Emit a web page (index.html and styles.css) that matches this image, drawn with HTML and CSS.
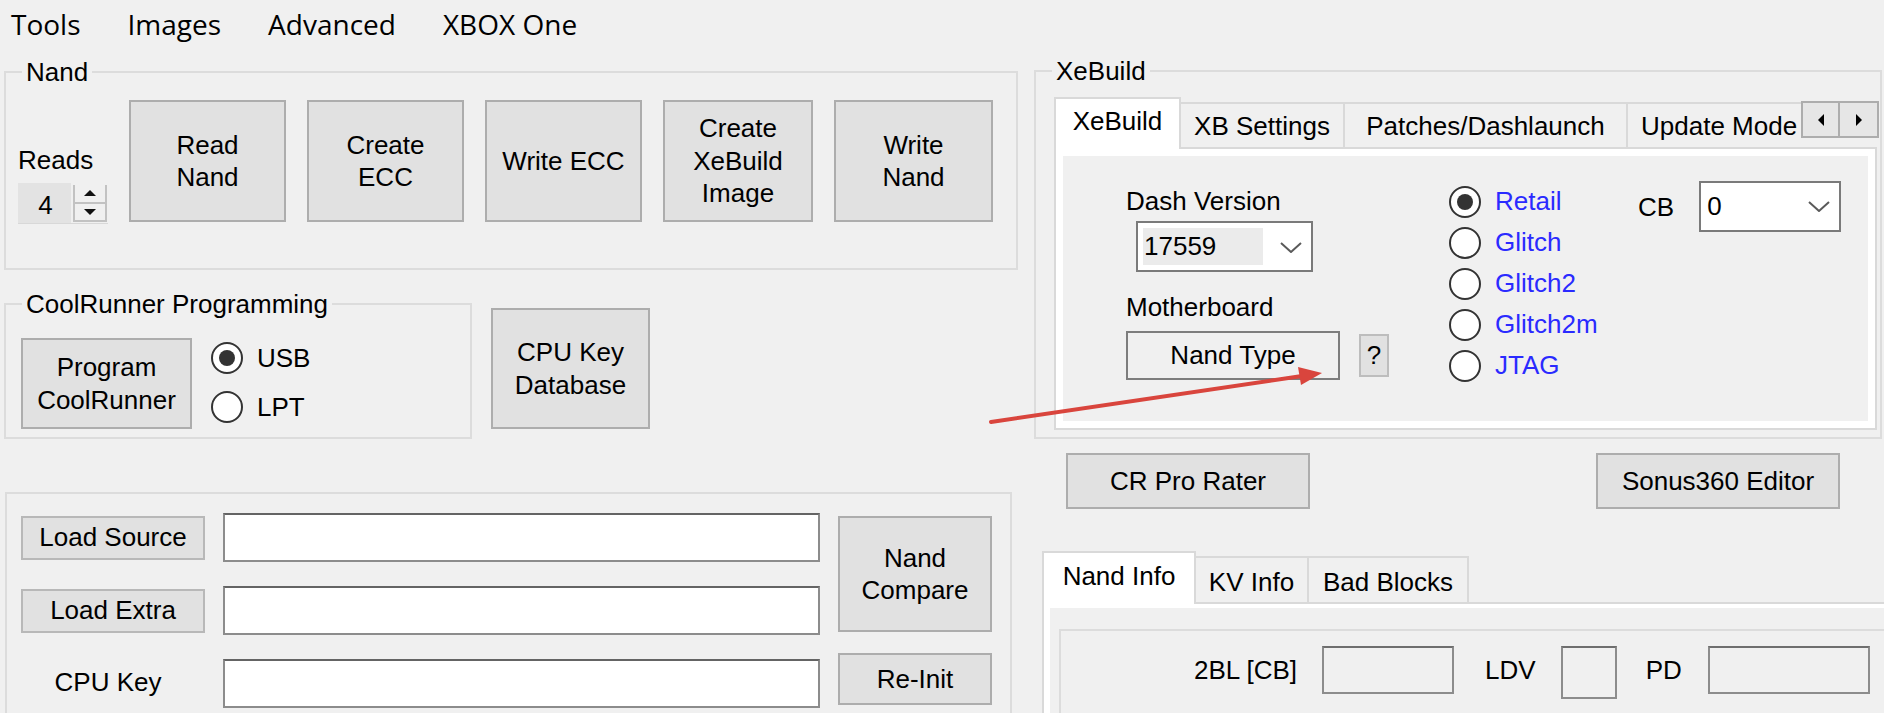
FILE: index.html
```html
<!DOCTYPE html>
<html>
<head>
<meta charset="utf-8">
<title>J-Runner</title>
<link rel="stylesheet" href="styles.css">
</head>
<body>
<div class="app">
  <nav class="menubar">
    <span class="menu-item">Tools</span>
    <span class="menu-item">Images</span>
    <span class="menu-item">Advanced</span>
    <span class="menu-item">XBOX One</span>
  </nav>

  <div class="main">
    <div class="col-left">
      <section class="group group-nand">
        <span class="group-title">Nand</span>
        <div class="nand-row">
          <div class="reads">
            <span class="label">Reads</span>
            <div class="spinner">
              <span class="spin-value">4</span>
              <span class="spin-buttons">
                <span class="spin-btn"><span class="tri-up"></span></span>
                <span class="spin-btn"><span class="tri-down"></span></span>
              </span>
            </div>
          </div>
          <button class="btn nb-read">Read<br>Nand</button>
          <button class="btn nb-create">Create<br>ECC</button>
          <button class="btn nb-write">Write ECC</button>
          <button class="btn nb-xebuild">Create<br>XeBuild<br>Image</button>
          <button class="btn nb-writenand">Write<br>Nand</button>
        </div>
      </section>

      <div class="cr-row">
        <section class="group group-cr">
          <span class="group-title">CoolRunner Programming</span>
          <div class="cr-content">
            <button class="btn prog-btn">Program<br>CoolRunner</button>
            <div class="radio-col">
              <div class="radio checked"><span class="circle"></span><span>USB</span></div>
              <div class="radio"><span class="circle"></span><span>LPT</span></div>
            </div>
          </div>
        </section>
        <button class="btn cpukey-btn">CPU Key<br>Database</button>
      </div>

      <section class="group group-files">
        <div class="files-grid">
          <button class="btn file-btn">Load Source</button>
          <div class="textbox"></div>
          <button class="btn compare-btn">Nand<br>Compare</button>
          <button class="btn file-btn">Load Extra</button>
          <div class="textbox"></div>
          <span class="cpu-label">CPU Key</span>
          <div class="textbox"></div>
          <button class="btn reinit-btn">Re-Init</button>
        </div>
      </section>
    </div>

    <div class="col-right">
      <section class="group group-xebuild">
        <span class="group-title">XeBuild</span>
        <div class="tabstrip">
          <div class="tablist">
            <span class="tab selected tab-xebuild">XeBuild</span>
            <span class="tab tab-xbset">XB Settings</span>
            <span class="tab tab-patches">Patches/Dashlaunch</span>
            <span class="tab tab-update">Update Mode</span>
          </div>
          <div class="tab-scroll">
            <span class="scroll-btn"><span class="tri-left"></span></span>
            <span class="scroll-btn"><span class="tri-right"></span></span>
          </div>
        </div>
        <div class="tabpage">
          <div class="page-inner xb-inner">
            <div class="xb-col1">
              <span class="label">Dash Version</span>
              <div class="combo dash-combo">
                <span class="combo-sel">17559</span>
                <svg class="chev" width="22" height="11" viewBox="0 0 22 11"><polyline points="1,1 11,10 21,1" fill="none" stroke="#5a5a5a" stroke-width="2"/></svg>
              </div>
              <span class="label mb-label">Motherboard</span>
              <div class="nandtype-row">
                <button class="btn nandtype-btn">Nand Type</button>
                <button class="btn q-btn">?</button>
              </div>
            </div>
            <div class="xb-radios">
              <div class="radio blue checked"><span class="circle"></span><span>Retail</span></div>
              <div class="radio blue"><span class="circle"></span><span>Glitch</span></div>
              <div class="radio blue"><span class="circle"></span><span>Glitch2</span></div>
              <div class="radio blue"><span class="circle"></span><span>Glitch2m</span></div>
              <div class="radio blue"><span class="circle"></span><span>JTAG</span></div>
            </div>
            <div class="cb-row">
              <span class="label">CB</span>
              <div class="combo cb-combo">
                <span class="combo-val">0</span>
                <svg class="chev" width="22" height="11" viewBox="0 0 22 11"><polyline points="1,1 11,10 21,1" fill="none" stroke="#5a5a5a" stroke-width="2"/></svg>
              </div>
            </div>
          </div>
        </div>
      </section>

      <div class="tool-row">
        <button class="btn wide-btn">CR Pro Rater</button>
        <button class="btn wide-btn">Sonus360 Editor</button>
      </div>

      <div class="info-tabs">
        <div class="tabstrip info-strip">
          <span class="tab selected tab-nandinfo">Nand Info</span>
          <span class="tab tab-kv">KV Info</span>
          <span class="tab tab-bad">Bad Blocks</span>
        </div>
        <div class="tabpage info-page">
          <div class="page-inner info-inner">
            <div class="group info-group">
              <div class="info-row">
                <span class="label info-label">2BL [CB]</span>
                <div class="rbox box-2bl"></div>
                <span class="label info-label ldv-label">LDV</span>
                <div class="rbox box-ldv"></div>
                <span class="label info-label pd-label">PD</span>
                <div class="rbox box-pd"></div>
              </div>
            </div>
          </div>
        </div>
      </div>
    </div>
  </div>

  <svg class="annotation" width="1884" height="713" viewBox="0 0 1884 713">
    <line x1="991" y1="422" x2="1302" y2="376" stroke="#d9453d" stroke-width="4" stroke-linecap="round"/>
    <polygon points="1322,373 1298,367 1301,385" fill="#d9453d"/>
  </svg>
</div>
</body>
</html>
```

FILE: styles.css
```css
* { box-sizing: border-box; }

html, body {
  margin: 0;
  padding: 0;
}

body {
  background: #f0f0f0;
  font-family: "Liberation Sans", Arial, sans-serif;
  font-size: 26px;
  color: #000;
}

.app {
  position: relative;
  width: 1884px;
  height: 713px;
  overflow: hidden;
}

/* ---------- menu ---------- */
.menubar {
  display: flex;
  align-items: center;
  height: 48px;
  padding-left: 11px;
  gap: 47px;
  font-family: "Open Sans", "Noto Sans", sans-serif;
  font-size: 28px;
  line-height: 48px;
}

/* ---------- main grid ---------- */
.main {
  display: grid;
  grid-template-columns: 1014px 848px;
  column-gap: 16px;
  padding-left: 4px;
  padding-top: 23px;
}

.col-left,
.col-right {
  display: flex;
  flex-direction: column;
  align-items: flex-start;
}

.col-right { margin-top: -1px; }

.label {
  line-height: 30px;
  white-space: nowrap;
}

/* ---------- group box ---------- */
.group {
  position: relative;
  border: 2px solid #dcdcdc;
}

.group-title {
  position: absolute;
  top: -16px;
  left: 16px;
  padding: 0 4px;
  line-height: 30px;
  background: #f0f0f0;
  white-space: nowrap;
}

/* ---------- buttons ---------- */
.btn {
  font: inherit;
  color: #000;
  background: #e1e1e1;
  border: 2px solid #adadad;
  margin: 0;
  padding: 0;
  line-height: 32.5px;
  text-align: center;
  display: flex;
  align-items: center;
  justify-content: center;
  white-space: nowrap;
}

/* ---------- Nand group ---------- */
.group-nand {
  width: 1014px;
  padding: 27px 12px 46px 12px;
}

.nand-row {
  display: flex;
  gap: 21px;
  height: 122px;
}

.reads {
  width: 90px;
  display: flex;
  flex-direction: column;
  justify-content: flex-end;
  margin-bottom: -2px;
}

.spinner {
  display: flex;
  margin-top: 8px;
  height: 41px;
  border-bottom: 1px solid #d8d8d8;
}

.spin-value {
  width: 53px;
  background: #e3e3e3;
  text-align: center;
  line-height: 41px;
  padding-top: 2px;
  padding-left: 2px;
}

.spin-buttons {
  margin-left: 2px;
  margin-top: 2px;
  width: 34px;
  height: 37px;
  border: 2px solid #c2c2c2;
  border-top: none;
  display: flex;
  flex-direction: column;
}

.spin-btn {
  flex: 1;
  display: flex;
  align-items: center;
  justify-content: center;
}

.spin-btn + .spin-btn { border-top: 2px solid #c2c2c2; }

.tri-up {
  width: 0; height: 0;
  border-left: 6px solid transparent;
  border-right: 6px solid transparent;
  border-bottom: 6px solid #111;
}

.tri-down {
  width: 0; height: 0;
  border-left: 6px solid transparent;
  border-right: 6px solid transparent;
  border-top: 6px solid #111;
}

.nb-read, .nb-create, .nb-write { width: 157px; }
.nb-xebuild { width: 150px; }
.nb-writenand { width: 159px; }

/* ---------- CoolRunner ---------- */
.cr-row {
  display: flex;
  align-items: flex-start;
  margin-top: 33px;
}

.group-cr {
  width: 468px;
  height: 136px;
  padding: 33px 0 0 15px;
}

.cr-content {
  display: flex;
  gap: 19px;
}

.prog-btn {
  width: 171px;
  height: 91px;
}

.radio-col {
  display: flex;
  flex-direction: column;
  gap: 9px;
}

.radio {
  display: flex;
  align-items: center;
  gap: 14px;
  height: 40px;
  white-space: nowrap;
}

.circle {
  width: 32px;
  height: 32px;
  border: 2.5px solid #333;
  border-radius: 50%;
  background: #fff;
  display: flex;
  align-items: center;
  justify-content: center;
  flex: none;
}

.radio.checked .circle::after {
  content: "";
  width: 16px;
  height: 16px;
  border-radius: 50%;
  background: #333;
}

.cpukey-btn {
  margin-left: 19px;
  margin-top: 5px;
  width: 159px;
  height: 121px;
}

/* ---------- file group ---------- */
.group-files {
  margin-top: 53px;
  margin-left: 1px;
  width: 1007px;
  height: 260px;
  padding: 19px 0 0 14px;
}

.files-grid {
  display: grid;
  grid-template-columns: 184px 597px 154px;
  grid-template-rows: 49px 49px 49px;
  column-gap: 18px;
  row-gap: 24px;
}

.file-btn {
  align-self: center;
  height: 44px;
  border-color: #b8b8b8;
}

.textbox {
  background: #fff;
  border: 2px solid #8c8c8c;
  border-top-color: #646464;
}

.compare-btn {
  grid-column: 3;
  grid-row: 1 / span 2;
  margin: 3px 0 3px 0;
}

.cpu-label {
  align-self: center;
  text-align: center;
  padding-right: 10px;
  margin-top: -4px;
  line-height: 30px;
}

.reinit-btn {
  align-self: start;
  margin-top: -6px;
  height: 52px;
}

/* ---------- XeBuild group ---------- */
.group-xebuild {
  width: 848px;
  height: 369px;
  padding: 25px 1px 7px 18px;
}

.tabstrip {
  display: flex;
  align-items: flex-end;
  height: 52px;
  margin-bottom: -2px;
  position: relative;
  z-index: 1;
}

.tablist {
  display: flex;
  align-items: flex-end;
  width: 747px;
  height: 100%;
  overflow: hidden;
}

.tab {
  flex: none;
  height: 45px;
  margin-bottom: 2px;
  border: 2px solid #d9d9d9;
  border-bottom: none;
  background: #f0f0f0;
  text-align: center;
  line-height: 41px;
  padding-top: 2px;
  white-space: nowrap;
  overflow: hidden;
}

.tab + .tab { border-left: none; }

.tab.selected {
  height: 52px;
  margin-bottom: 0;
  background: #fff;
  line-height: 44px;
  padding-top: 0;
}

.tab.selected + .tab { border-left: none; }

.tab-xebuild { width: 127px; }
.tab-xbset { width: 164px; }
.tab-patches { width: 283px; }
.tab-update { width: 200px; text-align: left; padding-left: 13px; }

.tab-scroll {
  display: flex;
  align-self: flex-start;
  margin-top: 4px;
}

.scroll-btn {
  width: 39px;
  height: 37px;
  background: #e6e6e6;
  border: 2px solid #adadad;
  display: flex;
  align-items: center;
  justify-content: center;
}

.scroll-btn + .scroll-btn { border-left: none; width: 39px; }

.tri-left {
  width: 0; height: 0;
  border-top: 6px solid transparent;
  border-bottom: 6px solid transparent;
  border-right: 6px solid #000;
}

.tri-right {
  width: 0; height: 0;
  border-top: 6px solid transparent;
  border-bottom: 6px solid transparent;
  border-left: 6px solid #000;
}

.tabpage {
  height: 283px;
  margin-right: 2px;
  border: 2px solid #d9d9d9;
  background: #fff;
  padding: 7px;
}

.page-inner {
  height: 100%;
  background: #f0f0f0;
}

.xb-inner {
  display: flex;
  align-items: flex-start;
  padding: 25px 0 0 63px;
}

.xb-col1 {
  width: 263px;
  padding-top: 5px;
  display: flex;
  flex-direction: column;
  align-items: flex-start;
}

.combo {
  display: flex;
  align-items: center;
  justify-content: space-between;
  background: #fff;
  border: 2px solid #7a7a7a;
  padding-right: 9px;
}

.dash-combo {
  margin-top: 5px;
  margin-left: 10px;
  width: 177px;
  height: 51px;
  align-items: flex-start;
}

.dash-combo .chev { margin-top: 19px; }

.combo-sel {
  margin: 5px 0 0 5px;
  width: 120px;
  height: 37px;
  line-height: 37px;
  background: #ebebeb;
  padding-left: 1px;
}

.mb-label { margin-top: 20px; }

.nandtype-row {
  display: flex;
  align-items: center;
  gap: 19px;
  margin-top: 9px;
}

.nandtype-btn {
  width: 214px;
  height: 49px;
  background: #f0f0f0;
  border-color: #7d7d7d;
}

.q-btn {
  width: 30px;
  height: 43px;
  border-color: #bdbdbd;
}

.xb-radios {
  margin-left: 60px;
  width: 189px;
  display: flex;
  flex-direction: column;
}

.xb-radios .radio { height: 41px; }

.radio.blue { color: #2a2aff; }

.cb-row {
  display: flex;
  align-items: center;
  height: 51px;
}

.cb-combo {
  margin-left: 25px;
  width: 142px;
  height: 51px;
  padding-left: 6px;
}

/* ---------- tool buttons ---------- */
.tool-row {
  display: flex;
  justify-content: space-between;
  width: 848px;
  margin-top: 14px;
  padding: 0 42px 0 32px;
}

.wide-btn {
  width: 244px;
  height: 56px;
}

/* ---------- Nand info tabs ---------- */
.info-tabs {
  margin-top: 42px;
  margin-left: 8px;
  width: 860px;
}

.info-strip { height: 53px; }

.info-strip .tab {
  height: 46px;
  line-height: 44px;
}

.info-strip .tab.selected {
  height: 53px;
  line-height: 46px;
}

.tab-nandinfo { width: 154px; }
.tab-kv { width: 113px; }
.tab-bad { width: 160px; }

.info-page {
  height: 140px;
  margin-right: 0;
  padding: 4px 0 0 6px;
}

.info-inner {
  padding: 21px 0 0 9px;
}

.info-group {
  height: 120px;
  padding: 15px 0 0 133px;
}

.info-row {
  display: flex;
  align-items: flex-start;
}

.info-label { line-height: 48px; }

.rbox {
  background: #f0f0f0;
  border: 2px solid #8c8c8c;
  border-top-color: #6e6e6e;
  height: 48px;
}

.box-2bl { width: 132px; margin-left: 25px; }
.ldv-label { margin-left: 31px; }
.box-ldv { width: 56px; height: 53px; margin-left: 25px; }
.pd-label { margin-left: 29px; }
.box-pd { width: 162px; margin-left: 26px; }

/* ---------- annotation ---------- */
.annotation {
  position: absolute;
  left: 0;
  top: 0;
  pointer-events: none;
}
```
